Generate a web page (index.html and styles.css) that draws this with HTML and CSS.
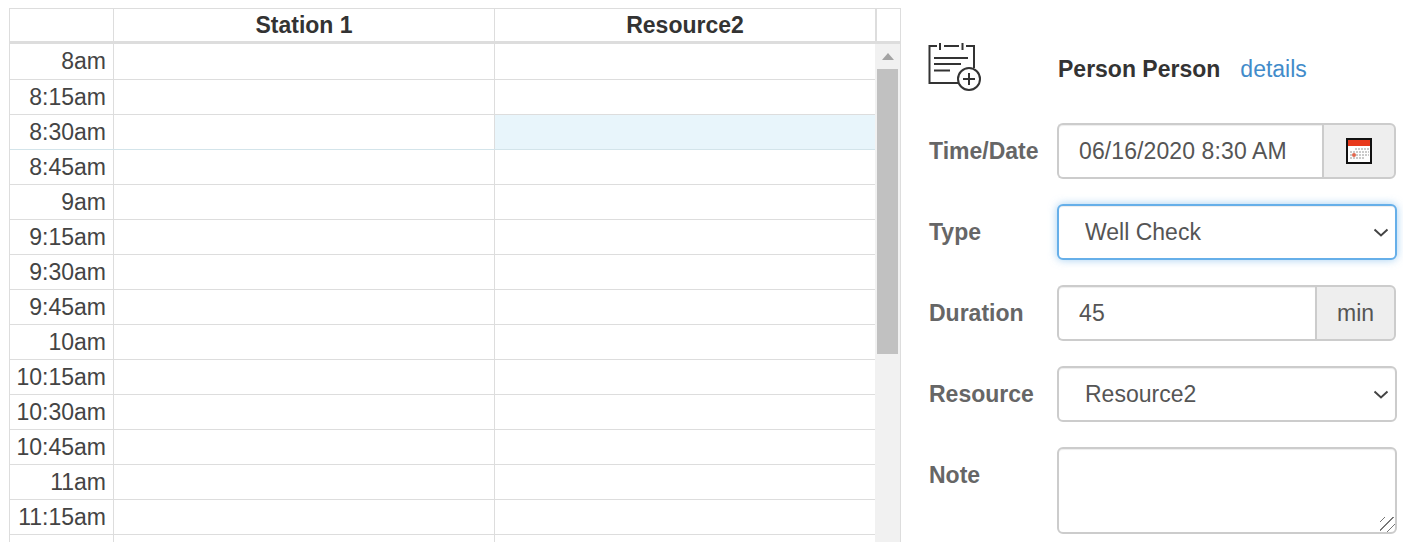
FILE: index.html
```html
<!DOCTYPE html>
<html lang="en">
<head>
    <meta charset="UTF-8">
    <title>New appointment</title>
    <link rel="stylesheet" href="styles.css">
</head>
<body>
<div class="page">
    <!-- schedule -->
    <div class="cal">
        <div class="cal-head">
            <div class="head-axis"></div>
            <div class="head-col">Station 1</div>
            <div class="head-col">Resource2</div>
            <div class="head-end"></div>
        </div>
        <div class="cal-body">
            <div class="cal-rows">
                <div class="slot"><div class="time">8am</div><div class="cell"></div><div class="cell"></div></div>
                <div class="slot"><div class="time">8:15am</div><div class="cell"></div><div class="cell"></div></div>
                <div class="slot"><div class="time">8:30am</div><div class="cell"></div><div class="cell selected"></div></div>
                <div class="slot"><div class="time">8:45am</div><div class="cell"></div><div class="cell"></div></div>
                <div class="slot"><div class="time">9am</div><div class="cell"></div><div class="cell"></div></div>
                <div class="slot"><div class="time">9:15am</div><div class="cell"></div><div class="cell"></div></div>
                <div class="slot"><div class="time">9:30am</div><div class="cell"></div><div class="cell"></div></div>
                <div class="slot"><div class="time">9:45am</div><div class="cell"></div><div class="cell"></div></div>
                <div class="slot"><div class="time">10am</div><div class="cell"></div><div class="cell"></div></div>
                <div class="slot"><div class="time">10:15am</div><div class="cell"></div><div class="cell"></div></div>
                <div class="slot"><div class="time">10:30am</div><div class="cell"></div><div class="cell"></div></div>
                <div class="slot"><div class="time">10:45am</div><div class="cell"></div><div class="cell"></div></div>
                <div class="slot"><div class="time">11am</div><div class="cell"></div><div class="cell"></div></div>
                <div class="slot"><div class="time">11:15am</div><div class="cell"></div><div class="cell"></div></div>
                <div class="slot"><div class="time"></div><div class="cell"></div><div class="cell"></div></div>
            </div>
            <div class="scroll">
                <div class="scroll-up"></div>
                <div class="scroll-thumb"></div>
            </div>
        </div>
    </div>

    <!-- appointment form -->
    <form class="form">
        <div class="form-top">
            <svg class="add-icon" width="54" height="48" viewBox="0 0 54 48" fill="none" stroke="#333" stroke-width="2">
                <path d="M9 3H1.500V40H31"/>
                <path d="M16 3H31"/>
                <path d="M38 3H46V25"/>
                <path d="M12 0V7M34.500 0V7"/>
                <path d="M6 15H40M6 21H33M6 27.500H22"/>
                <circle cx="41" cy="36" r="11"/>
                <path d="M41 30V42M35 36H47"/>
            </svg>
            <span class="person">Person Person</span>
            <a class="details" href="#">details</a>
        </div>

        <div class="row">
            <label class="label">Time/Date</label>
            <div class="group">
                <input class="control" type="text" value="06/16/2020 8:30 AM">
                <span class="addon addon-date">
                    <svg width="26" height="26" viewBox="0 0 26 26">
                        <rect x="1" y="1" width="24" height="24" fill="#fff" stroke="#111" stroke-width="2"/>
                        <rect x="2" y="2" width="22" height="6" fill="#e8391c"/>
                        <path d="M9 11H23M4 14H23M4 17H23M4 20H18" stroke="#bbb" stroke-width="1.500" stroke-dasharray="2 1"/>
                        <circle cx="8" cy="17" r="2" fill="#e2674f"/>
                    </svg>
                </span>
            </div>
        </div>

        <div class="row">
            <label class="label">Type</label>
            <select class="control select focused">
                <option>Well Check</option>
            </select>
        </div>

        <div class="row">
            <label class="label">Duration</label>
            <div class="group">
                <input class="control" type="text" value="45">
                <span class="addon addon-min">min</span>
            </div>
        </div>

        <div class="row">
            <label class="label">Resource</label>
            <select class="control select">
                <option>Resource2</option>
            </select>
        </div>

        <div class="row">
            <label class="label">Note</label>
            <textarea class="control note"></textarea>
        </div>
    </form>
</div>
</body>
</html>
```

FILE: styles.css
```css
html,body{margin:0;padding:0;height:100%;overflow:hidden;background:#fff;}
body,input,select,textarea{font:23px/1.4 "Liberation Sans", Arial, sans-serif;color:#555;}

.page{
    display:flex;
    height:534px;
    padding:8px 0 0 9px;
}

/* schedule */
.cal{
    width:890px;
    height:100%;
    border:1px solid #ddd;
    border-bottom:0;
    display:flex;
    flex-direction:column;
}
.cal-head{
    display:flex;
    height:32px;
    flex:none;
    border-bottom:3px solid #ddd;
}
.head-axis{
    width:103px;
    border-right:1px solid #ddd;
}
.head-col{
    width:380px;
    border-right:1px solid #ddd;
    text-align:center;
    font-weight:bold;
    line-height:33px;
    color:#333;
}
.head-end{
    flex:1;
    border-left:1px solid #ddd;
}
.cal-body{
    display:flex;
    flex:1;
    min-height:0;
    overflow:hidden;
}
.cal-rows{
    width:865px;
    flex:none;
}
.slot{
    display:flex;
    height:34px;
    border-bottom:1px solid #ddd;
}
.slot:first-child{
    height:35px;
}
.time{
    width:96px;
    padding-right:7px;
    border-right:1px solid #ddd;
    text-align:right;
    line-height:35px;
    color:#444;
}
.cell{
    width:380px;
    border-right:1px solid #ddd;
}
.cell:last-child{
    border-right:0;
}
.selected{
    background:#e8f5fb;
}
.slot:has(.selected){
    border-bottom-color:#d3e4ea;
}

.scroll{
    flex:1;
    background:#f1f1f1;
    padding:0 2px 0 2px;
}
.scroll-up{
    width:0;
    height:0;
    margin:9px auto 9px;
    border:6px solid transparent;
    border-top:0;
    border-bottom:7px solid #a3a3a3;
}
.scroll-thumb{
    height:285px;
    background:#c1c1c1;
}

/* form */
.form{
    width:469px;
    margin:35px 0 0 27px;
    flex:none;
}
.form-top{
    display:flex;
    align-items:center;
    height:48px;
    margin-bottom:32px;
}
.add-icon{
    flex:none;
    margin-right:76px;
}
.person{
    font-weight:bold;
    color:#333;
    margin-right:20px;
    position:relative;
    top:2px;
}
.details{
    color:#428bca;
    text-decoration:none;
    position:relative;
    top:2px;
}
.row{
    display:flex;
    margin-bottom:25px;
}
.label{
    width:128px;
    padding-left:1px;
    flex:none;
    font-weight:bold;
    line-height:56px;
    color:#666;
}
.control{
    box-sizing:border-box;
    width:340px;
    height:56px;
    padding:0 20px;
    border:2px solid #ccc;
    border-radius:6px;
    background:#fff;
    box-shadow:inset 0 1px 1px rgba(0,0,0,.075);
    outline:none;
    margin:0;
}
.select{
    appearance:none;
    padding-left:26px;
    background:#fff url("data:image/svg+xml,%3Csvg xmlns='http://www.w3.org/2000/svg' width='16' height='9' viewBox='0 0 16 9'%3E%3Cpath d='M1.500 1.500l6.500 6 6.500-6' fill='none' stroke='%23444' stroke-width='2'/%3E%3C/svg%3E") no-repeat right 6px center;
}
.focused{
    border-color:#66afe9;
    box-shadow:inset 0 1px 1px rgba(0,0,0,.075), 0 0 8px rgba(102,175,233,.6);
}
.group{
    display:flex;
    width:339px;
}
.group .control{
    flex:1;
    width:auto;
    min-width:0;
    border-right:0;
    border-radius:6px 0 0 6px;
    letter-spacing:.1px;
}
.addon{
    box-sizing:border-box;
    display:flex;
    align-items:center;
    justify-content:center;
    height:56px;
    flex:none;
    border:2px solid #ccc;
    border-radius:0 6px 6px 0;
    background:#eee;
}
.addon-date{
    width:74px;
}
.addon-min{
    width:81px;
}
.note{
    display:block;
    height:87px;
    padding:8px 20px;
}
.note::-webkit-resizer{
    background:repeating-linear-gradient(135deg, transparent 0 3px, #777 3px 4px, transparent 4px 6px);
}
```
